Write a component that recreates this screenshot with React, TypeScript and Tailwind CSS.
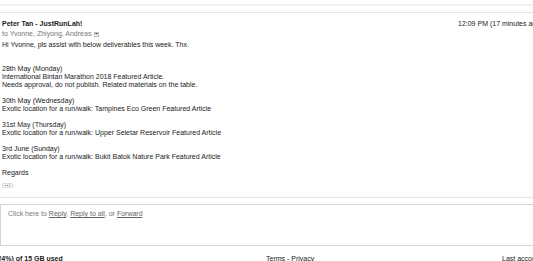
import React from "react";

export default function App() {
  return (
    <div
      className="w-[533px] h-[261px] overflow-hidden bg-white text-[#222] text-[7px] leading-[8px]"
      style={{ fontFamily: '"Liberation Sans", Arial, sans-serif' }}
    >
      <div className="w-[760px]">
        {/* top strip */}
        <div className="h-[4px]" />
        <div className="h-[2px] bg-[#f1f1f1]" />
        <div className="h-[6px]" />
        <div className="h-px bg-[#e5e5e5]" />

        {/* header */}
        <div className="flex pt-[7px] pl-[2px]">
          <div className="w-[456px] font-bold">Peter Tan - JustRunLah!</div>
          <div className="whitespace-nowrap">12:09 PM (17 minutes ago)</div>
        </div>
        <div className="flex items-center pl-[2px] mt-[2px] text-[#777]">
          <span>to Yvonne, Zhiyong, Andreas</span>
          <span className="ml-[3px] w-[5px] h-[5px] border border-[#bbb] flex items-center justify-center">
            <svg width="3" height="2" viewBox="0 0 3 2">
              <path d="M0 0 L3 0 L1.5 2 Z" fill="#666" />
            </svg>
          </span>
        </div>

        {/* body */}
        <div className="pl-[2px] mt-[3px]">
          <div>Hi Yvonne, pls assist with below deliverables this week. Thx.</div>
          <div className="mt-[16px]">28th May (Monday)</div>
          <div>International Bintan Marathon 2018 Featured Article.</div>
          <div>Needs approval, do not publish. Related materials on the table.</div>
          <div className="mt-[8px]">30th May (Wednesday)</div>
          <div>Exotic location for a run/walk: Tampines Eco Green Featured Article</div>
          <div className="mt-[8px]">31st May (Thursday)</div>
          <div>Exotic location for a run/walk: Upper Seletar Reservoir Featured Article</div>
          <div className="mt-[8px]">3rd June (Sunday)</div>
          <div>Exotic location for a run/walk: Bukit Batok Nature Park Featured Article</div>
          <div className="mt-[8px]">Regards</div>
          <div className="mt-[6px] w-[11px] h-[5px] rounded-[1px] bg-[#f1f1f1] border border-[#ddd] flex items-center justify-center gap-[1px]">
            <span className="w-[1px] h-[1px] bg-[#888]" />
            <span className="w-[1px] h-[1px] bg-[#888]" />
            <span className="w-[1px] h-[1px] bg-[#888]" />
          </div>
        </div>

        <div className="mt-[9px] h-px bg-[#e5e5e5]" />

        {/* reply box */}
        <div className="mt-[6px] h-[42px] border border-[#d4d4d4] pl-[7px] pt-[5px] text-[#777]">
          Click here to <span className="underline text-[#666]">Reply</span>,{" "}
          <span className="underline text-[#666]">Reply to all</span>, or{" "}
          <span className="underline text-[#666]">Forward</span>
        </div>

        {/* footer */}
        <div className="flex mt-[9px]">
          <div className="w-[267px] font-bold -ml-[1px]">(4%) of 15 GB used</div>
          <div className="w-[236px]">Terms - Privacy</div>
          <div className="whitespace-nowrap">Last account activity: 0 minutes ago</div>
        </div>
      </div>
    </div>
  );
}
